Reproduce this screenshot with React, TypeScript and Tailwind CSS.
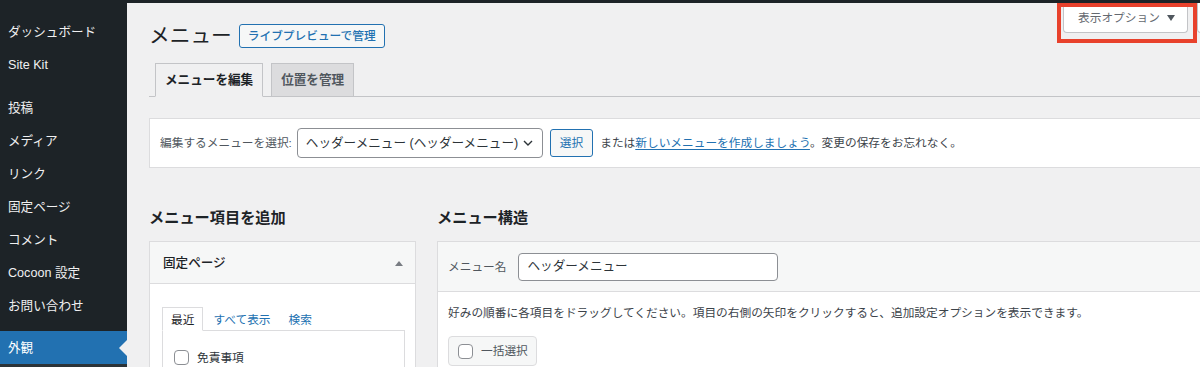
import React from 'react';

const sideTop = ['ダッシュボード', 'Site Kit'];
const sideMid = ['投稿', 'メディア', 'リンク', '固定ページ', 'コメント', 'Cocoon 設定', 'お問い合わせ'];

const Checkbox = () => (
    <span className="inline-block w-[15px] h-[15px] shrink-0 rounded-[4px] border border-[#8c8f94] bg-white" />
);

const Sidebar = () => (
    <aside className="w-[127px] shrink-0 bg-[#1d2327] text-[#f0f0f1] text-[12.6px] pt-[11px] flex flex-col">
        {sideTop.map((label) => (
            <div key={label} className="h-[33px] flex items-center pl-[8px] pt-[3px]">{label}</div>
        ))}
        <div className="h-[10px]" />
        {sideMid.map((label) => (
            <div key={label} className="h-[33px] flex items-center pl-[8px] pt-[3px]">{label}</div>
        ))}
        <div className="h-[10px]" />
        {/* current item */}
        <div className="relative h-[33px] flex items-center pl-[8px] pt-[1px] bg-[#2271b1] text-white">
            外観
            <span className="absolute right-0 top-1/2 -translate-y-1/2 w-0 h-0 border-y-[8px] border-y-transparent border-r-[8px] border-r-[#f0f0f1]" />
        </div>
        <div className="flex-1 bg-[#2c3338]" />
    </aside>
);

const ScreenOptions = () => (
    <div className="flex items-start">
        <div className="relative">
            <button className="h-[30px] w-[125px] flex items-center pl-[14px] gap-[7px] bg-white border border-t-0 border-[#c3c4c7] rounded-b-[4px] text-[11.7px] text-[#646970]">
                表示オプション
                <span className="w-0 h-0 border-x-[4px] border-x-transparent border-t-[6px] border-t-[#50575e]" />
            </button>
            {/* red highlight annotation */}
            <div className="absolute top-0 -left-[6px] -right-[9px] -bottom-[10px] border-4 border-[#e8412c] pointer-events-none" />
        </div>
        <div className="ml-[9px] h-[30px] w-[70px] bg-white border border-t-0 border-[#c3c4c7] rounded-b-[4px]" />
    </div>
);

export default function App() {
    return (
        <div className="w-[1200px] h-[367px] overflow-hidden flex flex-col bg-[#f0f0f1] font-['Liberation_Sans','Noto_Sans_CJK_JP',sans-serif]">
            <div className="h-[3px] shrink-0 bg-[#1d2327]" />
            <div className="flex flex-1 min-h-0">
                <Sidebar />

                <main className="flex-1 min-w-0 overflow-hidden">
                    <div className="w-[1140px] pl-[22px]">
                        {/* title + screen options */}
                        <div className="flex items-start justify-between">
                            <div className="pt-[21px] flex items-center">
                                <h1 className="text-[20.7px] leading-[24px] text-[#1d2327] font-normal">メニュー</h1>
                                <button className="ml-[7px] h-[24px] px-[8px] border border-[#2271b1] rounded-[3px] bg-[#f6f7f7] text-[#2271b1] text-[11.7px] font-medium">
                                    ライブプレビューで管理
                                </button>
                            </div>
                            <ScreenOptions />
                        </div>

                        {/* nav tabs */}
                        <div className="mt-[15px] mr-[20px] flex items-end gap-[8px] pl-[6px] border-b border-[#c3c4c7]">
                            <div className="h-[34px] -mb-px px-[9px] flex items-center bg-[#f0f0f1] border border-[#c3c4c7] border-b-[#f0f0f1] text-[12.6px] font-semibold text-[#1d2327]">
                                メニューを編集
                            </div>
                            <div className="h-[34px] -mb-px px-[9px] flex items-center bg-[#dcdcde] border border-[#c3c4c7] text-[12.6px] font-semibold text-[#50575e]">
                                位置を管理
                            </div>
                        </div>

                        {/* manage menus */}
                        <div className="mt-[21px] mr-[20px] h-[50px] flex items-center px-[10px] bg-white border border-[#dcdcde] text-[11.7px] text-[#3c434a]">
                            <span className="text-[#50575e]">編集するメニューを選択:</span>
                            <div className="ml-[5px] w-[246px] h-[30px] flex items-center justify-between pl-[8px] pr-[9px] border border-[#8c8f94] rounded-[4px] bg-white text-[12.6px] text-[#2c3338]">
                                <span>ヘッダーメニュー (ヘッダーメニュー)</span>
                                <svg width="10" height="6" viewBox="0 0 10 6" fill="none">
                                    <path d="M1 1l4 4 4-4" stroke="#2c3338" strokeWidth="1.4" />
                                </svg>
                            </div>
                            <button className="ml-[7px] h-[28px] px-[9px] border border-[#2271b1] rounded-[3px] bg-[#f6f7f7] text-[#2271b1] text-[11.7px]">
                                選択
                            </button>
                            <span className="ml-[7px]">
                                または<a className="text-[#2271b1] underline underline-offset-2">新しいメニューを作成しましょう</a>。変更の保存をお忘れなく。
                            </span>
                        </div>

                        {/* columns */}
                        <div className="mt-[40px] mr-[20px] flex gap-[21px]">
                            <div className="w-[267px] shrink-0">
                                <h2 className="text-[15.2px] leading-[20px] font-semibold text-[#1d2327]">メニュー項目を追加</h2>
                                <div className="mt-[13px] bg-white border border-[#dcdcde]">
                                    <div className="h-[42px] flex items-center justify-between pl-[13px] pr-[12px] pt-[2px] bg-[#f6f7f7] border-b border-[#dcdcde]">
                                        <span className="text-[12.6px] font-medium text-[#1d2327]">固定ページ</span>
                                        <span className="w-0 h-0 border-x-[4px] border-x-transparent border-b-[5px] border-b-[#787c82]" />
                                    </div>
                                    <div className="pt-[23px] pl-[12px] pr-[10px] pb-[40px]">
                                        <div className="flex items-end text-[11.7px]">
                                            <div className="h-[24px] -mb-px px-[8px] pt-[2px] flex items-center bg-white border border-[#dcdcde] border-b-white text-[#1d2327] relative z-10">
                                                最近
                                            </div>
                                            <div className="h-[23px] px-[9px] ml-px pt-[3px] flex items-center text-[#2271b1]">すべて表示</div>
                                            <div className="h-[23px] px-[9px] pt-[3px] flex items-center text-[#2271b1]">検索</div>
                                        </div>
                                        <div className="border border-[#dcdcde] pt-[18px] pl-[11px] pb-[20px] flex items-center gap-[8px] text-[11.7px] text-[#2c3338]">
                                            <Checkbox />
                                            <span>免責事項</span>
                                        </div>
                                    </div>
                                </div>
                            </div>

                            <div className="flex-1 min-w-0">
                                <h2 className="text-[15.2px] leading-[20px] font-semibold text-[#1d2327]">メニュー構造</h2>
                                <div className="mt-[13px] bg-white border border-[#dcdcde]">
                                    <div className="h-[50px] flex items-center pl-[10px] bg-[#f6f7f7] border-b border-[#dcdcde]">
                                        <span className="text-[11.7px] text-[#50575e]">メニュー名</span>
                                        <div className="ml-[12px] w-[260px] h-[28px] flex items-center pl-[8px] bg-white border border-[#8c8f94] rounded-[4px] text-[12.6px] text-[#2c3338]">
                                            ヘッダーメニュー
                                        </div>
                                    </div>
                                    <div className="pt-[12px] pl-[10px] pb-[30px]">
                                        <p className="text-[11.7px] leading-[18px] text-[#3c434a]">
                                            好みの順番に各項目をドラッグしてください。項目の右側の矢印をクリックすると、追加設定オプションを表示できます。
                                        </p>
                                        <div className="mt-[14px] w-[89px] h-[30px] flex items-center gap-[8px] pl-[9px] bg-[#f6f7f7] border border-[#dcdcde] rounded-[4px] text-[11.7px] text-[#50575e]">
                                            <Checkbox />
                                            <span>一括選択</span>
                                        </div>
                                    </div>
                                </div>
                            </div>
                        </div>
                    </div>
                </main>
            </div>
        </div>
    );
}
